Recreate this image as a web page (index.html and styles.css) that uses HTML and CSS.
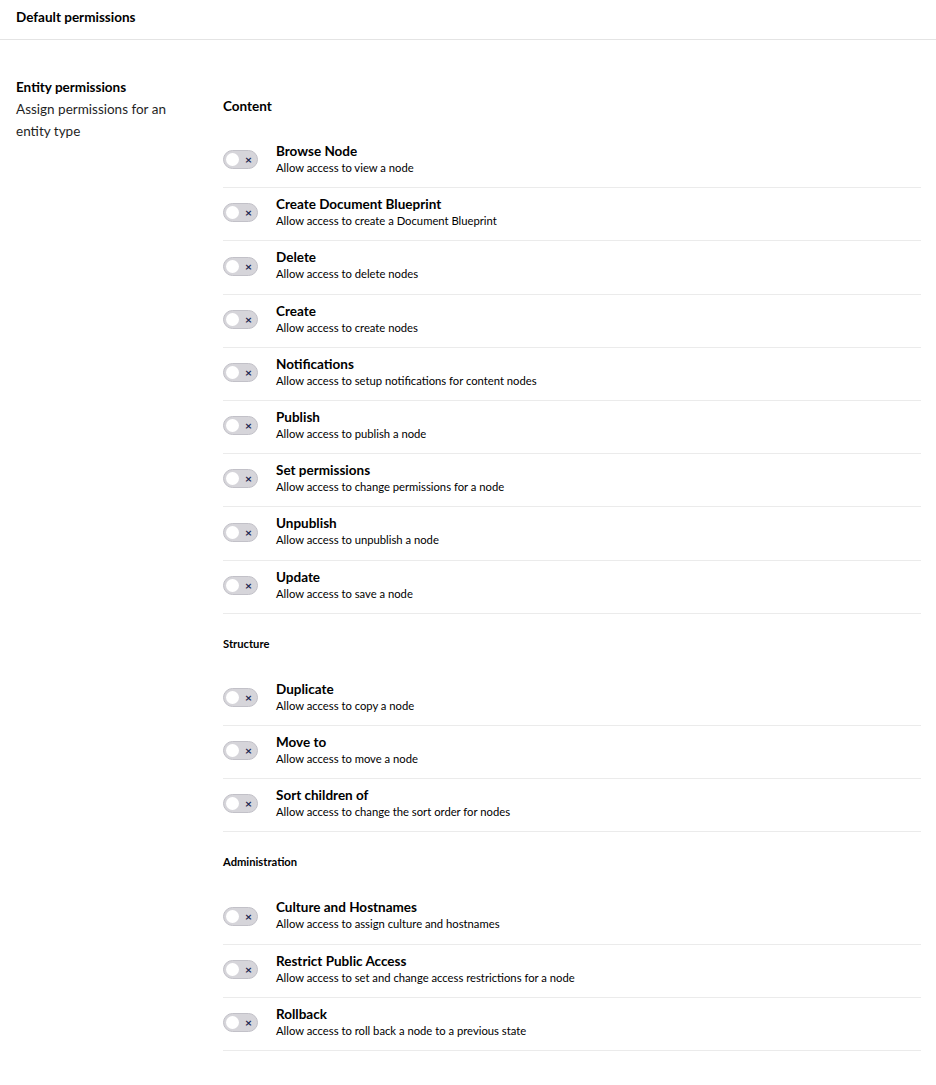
FILE: index.html
```html
<!DOCTYPE html>
<html lang="en">
<head>
<meta charset="utf-8">
<title>Default permissions</title>
<link rel="stylesheet" href="styles.css">
</head>
<body>
<header class="header">Default permissions</header>
<main class="property">
  <div class="label">
    <div class="label-title">Entity permissions</div>
    <div class="label-desc">Assign permissions for an entity type</div>
  </div>
  <div class="editor">
    <h3 class="group group-main">Content</h3>
    <ul class="list">
      <li class="row"><span class="toggle"><span class="knob"></span><span class="x">×</span></span><div class="text"><div class="name">Browse Node</div><div class="desc">Allow access to view a node</div></div></li>
      <li class="row"><span class="toggle"><span class="knob"></span><span class="x">×</span></span><div class="text"><div class="name">Create Document Blueprint</div><div class="desc">Allow access to create a Document Blueprint</div></div></li>
      <li class="row"><span class="toggle"><span class="knob"></span><span class="x">×</span></span><div class="text"><div class="name">Delete</div><div class="desc">Allow access to delete nodes</div></div></li>
      <li class="row"><span class="toggle"><span class="knob"></span><span class="x">×</span></span><div class="text"><div class="name">Create</div><div class="desc">Allow access to create nodes</div></div></li>
      <li class="row"><span class="toggle"><span class="knob"></span><span class="x">×</span></span><div class="text"><div class="name">Notifications</div><div class="desc">Allow access to setup notifications for content nodes</div></div></li>
      <li class="row"><span class="toggle"><span class="knob"></span><span class="x">×</span></span><div class="text"><div class="name">Publish</div><div class="desc">Allow access to publish a node</div></div></li>
      <li class="row"><span class="toggle"><span class="knob"></span><span class="x">×</span></span><div class="text"><div class="name">Set permissions</div><div class="desc">Allow access to change permissions for a node</div></div></li>
      <li class="row"><span class="toggle"><span class="knob"></span><span class="x">×</span></span><div class="text"><div class="name">Unpublish</div><div class="desc">Allow access to unpublish a node</div></div></li>
      <li class="row"><span class="toggle"><span class="knob"></span><span class="x">×</span></span><div class="text"><div class="name">Update</div><div class="desc">Allow access to save a node</div></div></li>
    </ul>
    <h4 class="group">Structure</h4>
    <ul class="list">
      <li class="row"><span class="toggle"><span class="knob"></span><span class="x">×</span></span><div class="text"><div class="name">Duplicate</div><div class="desc">Allow access to copy a node</div></div></li>
      <li class="row"><span class="toggle"><span class="knob"></span><span class="x">×</span></span><div class="text"><div class="name">Move to</div><div class="desc">Allow access to move a node</div></div></li>
      <li class="row"><span class="toggle"><span class="knob"></span><span class="x">×</span></span><div class="text"><div class="name">Sort children of</div><div class="desc">Allow access to change the sort order for nodes</div></div></li>
    </ul>
    <h4 class="group">Administration</h4>
    <ul class="list">
      <li class="row"><span class="toggle"><span class="knob"></span><span class="x">×</span></span><div class="text"><div class="name">Culture and Hostnames</div><div class="desc">Allow access to assign culture and hostnames</div></div></li>
      <li class="row"><span class="toggle"><span class="knob"></span><span class="x">×</span></span><div class="text"><div class="name">Restrict Public Access</div><div class="desc">Allow access to set and change access restrictions for a node</div></div></li>
      <li class="row"><span class="toggle"><span class="knob"></span><span class="x">×</span></span><div class="text"><div class="name">Rollback</div><div class="desc">Allow access to roll back a node to a previous state</div></div></li>
    </ul>
  </div>
</main>
</body>
</html>
```
FILE: styles.css
```css
* { box-sizing: border-box; }
html, body { margin: 0; padding: 0; background: #fff; }
body {
  font-family: Lato, "Open Sans", "Liberation Sans", sans-serif;
  color: #000;
  width: 936px;
}
.header {
  height: 40px;
  border-bottom: 1px solid #e4e4e4;
  padding: 0 16px 6px;
  display: flex;
  align-items: center;
  font-weight: 700;
  font-size: 13.5px;
}
.property {
  display: flex;
  padding: 37px 15px 0 16px;
}
.label {
  width: 175px;
  flex: none;
  margin-right: 32px;
  font-size: 13.5px;
  line-height: 22px;
}
.label-title { font-weight: 700; line-height: 21px; }
.label-desc { color: #1f1f1f; }
.editor { flex: 1; padding-top: 19px; }
.group {
  margin: 22px 0 21px;
  font-size: 11.2px;
  line-height: 16px;
  font-weight: 700;
}
.group-main {
  margin: 0 0 19px;
  font-size: 13.5px;
  line-height: 20px;
}
.list { list-style: none; margin: 0; padding: 0; }
.row {
  display: flex;
  align-items: center;
  padding: 8px 0 11px;
  border-bottom: 1px solid #ebebeb;
}
.toggle {
  position: relative;
  flex: none;
  width: 35px;
  height: 19px;
  border-radius: 10px;
  background: #d6d5da;
  border: 1px solid #c2c1c8;
  margin-right: 18px;
}
.knob {
  position: absolute;
  left: 2px;
  top: 2px;
  width: 13px;
  height: 13px;
  border-radius: 50%;
  background: #fff;
}
.x {
  position: absolute;
  right: 5px;
  top: 0;
  line-height: 17px;
  font-size: 12px;
  font-weight: 700;
  color: #1b264f;
}
.name { font-size: 13.5px; font-weight: 700; line-height: 16px; }
.desc { font-size: 11.25px; line-height: 17.2px; }
```
